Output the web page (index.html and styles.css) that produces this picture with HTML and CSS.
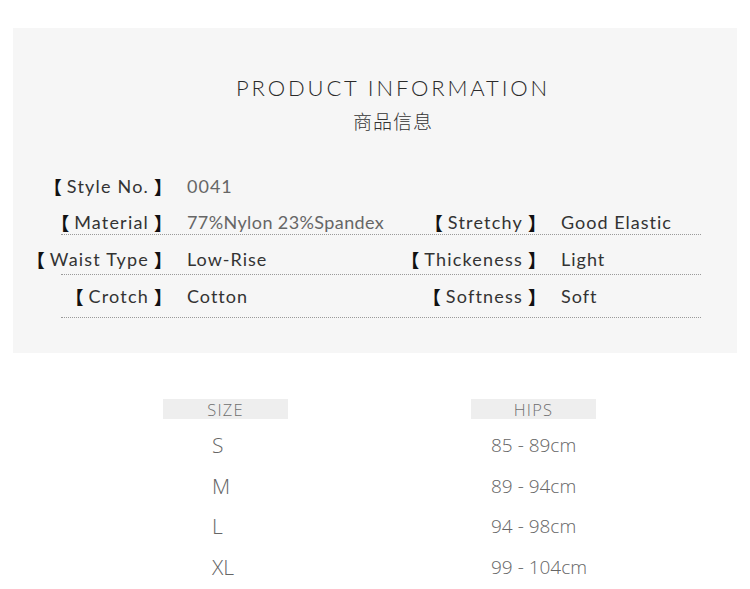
FILE: index.html
```html
<!DOCTYPE html>
<html>
<head>
<meta charset="utf-8">
<link rel="stylesheet" href="styles.css">
</head>
<body>
<section class="panel">
  <div class="heading">
    <h1 class="title">PRODUCT INFORMATION</h1>
    <h2 class="subtitle">商品信息</h2>
  </div>
  <div class="specs">
    <div class="row row-1">
      <div class="label"><span class="bk open">【</span>Style No.<span class="bk close">】</span></div>
      <div class="value light">0041</div>
      <div class="label"></div>
      <div class="value"></div>
    </div>
    <div class="row row-2 lined">
      <div class="label"><span class="bk open">【</span>Material<span class="bk close">】</span></div>
      <div class="value light tight">77%Nylon 23%Spandex</div>
      <div class="label"><span class="bk open">【</span>Stretchy<span class="bk close">】</span></div>
      <div class="value">Good Elastic</div>
    </div>
    <div class="row row-3 lined">
      <div class="label"><span class="bk open">【</span>Waist Type<span class="bk close">】</span></div>
      <div class="value">Low-Rise</div>
      <div class="label"><span class="bk open">【</span>Thickeness<span class="bk close">】</span></div>
      <div class="value">Light</div>
    </div>
    <div class="row row-4 lined">
      <div class="label"><span class="bk open">【</span>Crotch<span class="bk close">】</span></div>
      <div class="value">Cotton</div>
      <div class="label"><span class="bk open">【</span>Softness<span class="bk close">】</span></div>
      <div class="value">Soft</div>
    </div>
  </div>
</section>

<section class="sizes">
  <div class="col col-size">
    <div class="head">SIZE</div>
    <div class="cell">S</div>
    <div class="cell">M</div>
    <div class="cell">L</div>
    <div class="cell">XL</div>
  </div>
  <div class="col col-hips">
    <div class="head">HIPS</div>
    <div class="cell">85 - 89cm</div>
    <div class="cell">89 - 94cm</div>
    <div class="cell">94 - 98cm</div>
    <div class="cell">99 - 104cm</div>
  </div>
</section>
</body>
</html>
```
FILE: styles.css
```css
html, body {
  margin: 0;
  padding: 0;
  background: #ffffff;
}
body {
  font-family: Lato, "Noto Sans CJK SC", sans-serif;
  color: #333;
}
.panel {
  margin: 28px 13px 0 13px;
  height: 325px;
  box-sizing: border-box;
  background: #f6f6f6;
  padding-top: 47px;
}
.heading {
  padding-left: 36px;
  text-align: center;
}
.title {
  margin: 0;
  font-family: Lato, sans-serif;
  font-weight: 300;
  font-size: 22px;
  line-height: 26px;
  letter-spacing: 2.85px;
  color: #2a2a2a;
}
.subtitle {
  margin: 8px 0 0 0;
  font-family: "Noto Sans CJK SC", sans-serif;
  font-weight: 300;
  font-size: 19px;
  line-height: 24px;
  letter-spacing: 1px;
  color: #333;
}
.specs {
  margin-top: 35px;
  margin-left: 48px;
  width: 640px;
}
.row {
  display: grid;
  grid-template-columns: 106px 20px 204px 150px 20px 140px;
  grid-template-areas: "l1 . v1 l2 . v2";
  align-items: end;
  box-sizing: border-box;
  font-size: 18px;
  line-height: 24px;
}
.row > :nth-child(1) { grid-area: l1; }
.row > :nth-child(2) { grid-area: v1; }
.row > :nth-child(3) { grid-area: l2; }
.row > :nth-child(4) { grid-area: v2; }
.lined {
  border-bottom: 1px dotted #9a9a9a;
}
.row-1 { height: 37px; padding-bottom: 7px; }
.row-2 { height: 30px; padding-bottom: 0; }
.row-3 { height: 40px; padding-bottom: 3px; }
.row-4 { height: 43px; padding-bottom: 9px; }
.label {
  display: flex;
  justify-content: flex-end;
  white-space: nowrap;
  letter-spacing: 1.2px;
  color: #333;
  margin-right: -5px;
}
.bk {
  font-family: "Noto Sans CJK SC", sans-serif;
  font-weight: 900;
  font-size: 18px;
  color: #111;
  letter-spacing: 0;
}
.bk.open { margin-right: 5px; }
.bk.close { margin-left: 5px; }
.value {
  white-space: nowrap;
  letter-spacing: 1px;
  color: #333;
}
.value.light {
  color: #666;
}
.value.tight {
  letter-spacing: 0.4px;
}
.sizes {
  display: flex;
  gap: 183px;
  margin: 46px 0 0 163px;
  font-family: "Open Sans", sans-serif;
  font-weight: 300;
  color: #666;
}
.col {
  width: 125px;
}
.head {
  height: 20px;
  background: #eeeeee;
  text-align: center;
  font-size: 16.5px;
  line-height: 22px;
  letter-spacing: 1.2px;
  color: #6e6e6e;
  margin-bottom: 6px;
}
.cell {
  height: 40.7px;
  line-height: 41px;
  white-space: nowrap;
}
.col-size .cell {
  padding-left: 49px;
  font-size: 21px;
}
.col-hips .cell {
  padding-left: 20px;
  font-size: 19px;
}
```
